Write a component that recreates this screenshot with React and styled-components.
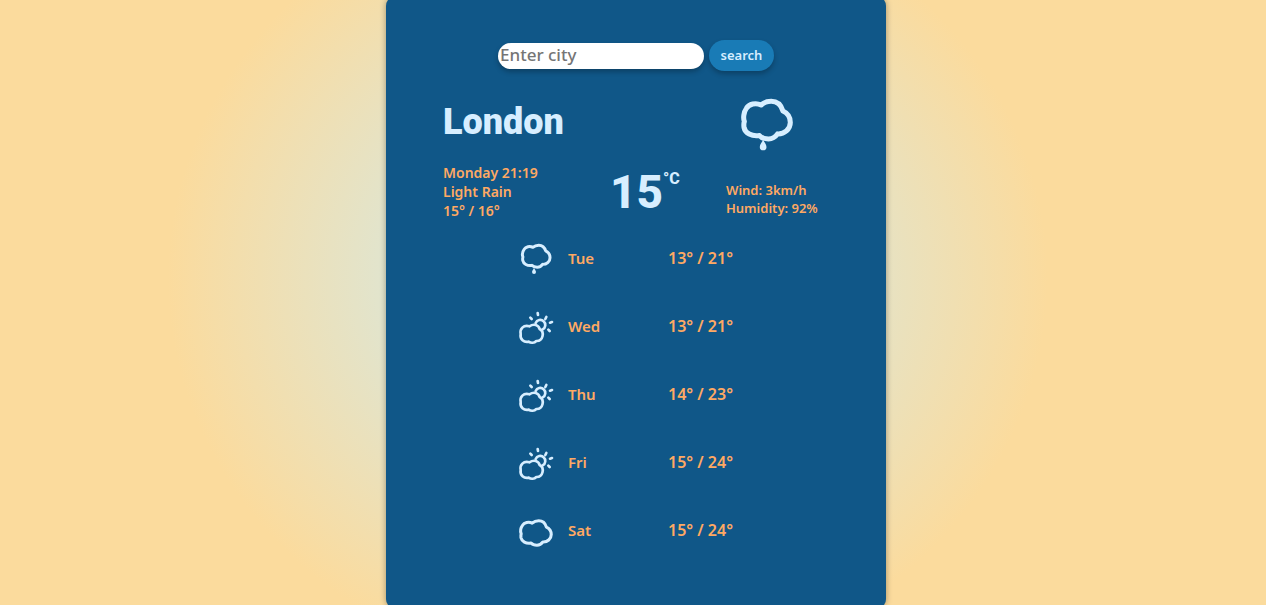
import React from "react";
import styled, { createGlobalStyle } from "styled-components";

const GlobalStyle = createGlobalStyle`
  *, *::before, *::after { box-sizing: border-box; }
  body {
    margin: 0;
    color: #ffa963;
    font-family: "Noto Sans", "Open Sans", sans-serif;
    font-weight: 600;
  }
  h1, h2, p, ul { margin: 0; padding: 0; }
`;

const Page = styled.main`
  display: flex;
  justify-content: center;
  min-height: 100vh;
  padding-left: 6px;
  overflow: hidden;
  background: radial-gradient(ellipse 440px 400px at 48% 46%, #c7eeff 0%, #fbdb9d 100%);
`;

const Card = styled.section`
  width: 100%;
  max-width: 500px;
  margin: -4px 0;
  padding: 44px 56px 40px;
  border-radius: 10px;
  background: #105788;
  box-shadow: 0 0 6px rgba(0, 0, 0, 0.35);
`;

const SearchForm = styled.form`
  display: flex;
  justify-content: center;
  align-items: center;
  gap: 5px;
`;

const CityInput = styled.input`
  width: 206px;
  height: 26px;
  padding: 0 2px 2px;
  border: 0;
  border-radius: 13px;
  background: #fff;
  color: #333;
  font: 500 17px "Noto Sans", sans-serif;
  box-shadow: 0 3px 5px rgba(0, 0, 0, 0.25);
  &::placeholder { color: #757575; opacity: 1; }
`;

const SearchButton = styled.button`
  width: 65px;
  height: 31px;
  padding: 0 0 2px;
  border: 0;
  border-radius: 16px;
  background: #197bb6;
  color: #d7eeff;
  font: 600 13px "Noto Sans", sans-serif;
  box-shadow: 0 3px 5px rgba(0, 0, 0, 0.25);
  cursor: pointer;
`;

const CityRow = styled.header`
  display: flex;
  justify-content: space-between;
  align-items: center;
  height: 52px;
  margin-top: 28px;
  padding: 0 37px 0 1px;
`;

const City = styled.h1`
  padding-bottom: 6px;
  color: #d7eeff;
  font: 900 36px/44px Roboto, sans-serif;
`;

const Conditions = styled.div`
  display: grid;
  grid-template-columns: 168px 116px 1fr;
  margin-top: 12px;
`;

const Summary = styled.div`
  padding-left: 1px;
  font-size: 14px;
  line-height: 19px;
`;

const Details = styled.div`
  padding-top: 18px;
  font-size: 13px;
  line-height: 18px;
`;

const Temperature = styled.div`
  display: flex;
  align-items: flex-start;
  color: #d7eeff;
  font: 800 46px/58px Roboto, sans-serif;
`;

const Unit = styled.span`
  font-size: 16px;
  line-height: 32px;
`;

const Forecast = styled.ul`
  width: 234px;
  margin: 3px auto 0;
  list-style: none;
`;

const Day = styled.li`
  display: grid;
  grid-template-columns: 49px 100px 1fr;
  align-items: center;
  height: 68px;
  font-size: 15px;

  svg { margin-top: 4px; }
`;

const DayTemps = styled.span`
  font-size: 16px;
`;

const Icon = styled.svg`
  display: block;
  width: ${(p) => p.$size}px;
  height: ${(p) => p.$size}px;
  overflow: visible;
  fill: none;
  stroke: #d7eeff;
  stroke-linecap: round;
  stroke-linejoin: round;
`;

const CLOUD =
  "M58 94C54 84 56 66 64 55C72 42 92 37 108 45C118 36 128 34 138 34C156 34 168 46 173 63C186 69 195 82 195 97C195 117 177 132 157 131C150 141 140 146 130 146C118 146 109 143 103 136C80 140 60 128 57 112C56 104 56 99 58 94Z";

function WeatherIcon({ type, size, small }) {
  if (type === "rain") {
    return (
      <Icon $size={size} viewBox={small ? "38 23 172 172" : "48 27 155 155"} role="img" aria-label="Rain">
        <path d={CLOUD} strokeWidth="15" />
        <path d="M114 148C111 157 104 162 104 170A10 10 0 0 0 124 170C124 162 117 157 114 148Z" fill="#d7eeff" stroke="none" />
      </Icon>
    );
  }
  if (type === "cloud") {
    return (
      <Icon $size={size} viewBox="48 8 155 155" role="img" aria-label="Cloudy">
        <path d={CLOUD} strokeWidth="14" />
      </Icon>
    );
  }
  return (
    <Icon $size={size} viewBox="27 25 102 102" role="img" aria-label="Partly cloudy">
      <g strokeWidth="8">
        <path d="M77 61A15 15 0 1 1 98 80" />
        <path d="M83 31L84 37M109 43L106 49M120 60L126 58M115 81L119 85M61 45L65 49" />
        <path d="M32 94C29 79 40 66 58 71C72 62 85 67 89 79C105 88 99 116 79 115C73 121 63 122 56 117C42 120 29 110 32 94Z" />
      </g>
    </Icon>
  );
}

const days = [
  { name: "Tue", icon: "rain", temps: "13° / 21°" },
  { name: "Wed", icon: "partly", temps: "13° / 21°" },
  { name: "Thu", icon: "partly", temps: "14° / 23°" },
  { name: "Fri", icon: "partly", temps: "15° / 24°" },
  { name: "Sat", icon: "cloud", temps: "15° / 24°" },
];

export default function App() {
  return (
    <Page>
      <GlobalStyle />
      <Card>
        <SearchForm onSubmit={(e) => e.preventDefault()}>
          <CityInput type="text" placeholder="Enter city" aria-label="Enter city" />
          <SearchButton type="submit">search</SearchButton>
        </SearchForm>
        <CityRow>
          <City>London</City>
          <WeatherIcon type="rain" size={52} />
        </CityRow>
        <Conditions>
          <Summary>
            <p>Monday 21:19</p>
            <p>Light Rain</p>
            <p>15° / 16°</p>
          </Summary>
          <Temperature>
            15<Unit>°C</Unit>
          </Temperature>
          <Details>
            <p>Wind: 3km/h</p>
            <p>Humidity: 92%</p>
          </Details>
        </Conditions>
        <Forecast>
          {days.map((day) => (
            <Day key={day.name}>
              <WeatherIcon type={day.icon} size={34} small />
              <span>{day.name}</span>
              <DayTemps>{day.temps}</DayTemps>
            </Day>
          ))}
        </Forecast>
      </Card>
    </Page>
  );
}
